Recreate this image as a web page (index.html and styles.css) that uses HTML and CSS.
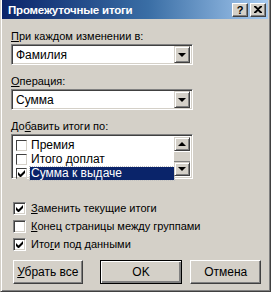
FILE: index.html
```html
<!DOCTYPE html>
<html lang="ru">
<head>
    <meta charset="UTF-8">
    <title>Промежуточные итоги</title>
    <link rel="stylesheet" href="styles.css">
</head>
<body>

<div class="dialog">
    <div class="titlebar">
        <span class="title">Промежуточные итоги</span>
        <div class="title-buttons">
            <span class="tbtn">?</span>
            <span class="tbtn">
                <svg width="8" height="7" viewBox="0 0 8 7"><path d="M0 0h2l2 2 2-2h2v1L5 3.5 8 6v1H6L4 5 2 7H0V6l3-2.5L0 1z" fill="#000"/></svg>
            </span>
        </div>
    </div>

    <div class="content">
        <div class="label first"><u>П</u>ри каждом изменении в:</div>
        <div class="combo">
            <span class="combo-text">Фамилия</span>
            <span class="drop"><span class="arrow-down"></span></span>
        </div>

        <div class="label"><u>О</u>перация:</div>
        <div class="combo">
            <span class="combo-text">Сумма</span>
            <span class="drop"><span class="arrow-down"></span></span>
        </div>

        <div class="label">До<u>б</u>авить итоги по:</div>
        <div class="listbox">
            <div class="list-items">
                <div class="item"><span class="lcheck"></span><span class="item-text">Премия</span></div>
                <div class="item"><span class="lcheck"></span><span class="item-text">Итого доплат</span></div>
                <div class="item">
                    <span class="lcheck"><svg width="7" height="7" viewBox="0 0 7 7"><path d="M0 2v3l2 2h1l4-4V0L2.5 4.5z" fill="#000"/></svg></span>
                    <span class="item-text selected">Сумма к выдаче</span>
                </div>
            </div>
            <div class="scrollbar">
                <span class="sbtn"><span class="arrow-up"></span></span>
                <span class="thumb"></span>
                <span class="sbtn"><span class="arrow-down"></span></span>
            </div>
        </div>

        <div class="options">
            <div class="option">
                <span class="check"><svg width="7" height="7" viewBox="0 0 7 7"><path d="M0 2v3l2 2h1l4-4V0L2.5 4.5z" fill="#000"/></svg></span>
                <span><u>З</u>аменить текущие итоги</span>
            </div>
            <div class="option">
                <span class="check"></span>
                <span><u>К</u>онец страницы между группами</span>
            </div>
            <div class="option">
                <span class="check"><svg width="7" height="7" viewBox="0 0 7 7"><path d="M0 2v3l2 2h1l4-4V0L2.5 4.5z" fill="#000"/></svg></span>
                <span>Ито<u>г</u>и под данными</span>
            </div>
        </div>

        <div class="buttons">
            <button class="btn"><u>У</u>брать все</button>
            <button class="btn default">OK</button>
            <button class="btn">Отмена</button>
        </div>
    </div>
</div>

</body>
</html>
```

FILE: styles.css
```css
body {
    margin: 0;
    padding: 0;
    background-color: #fff;
    font-family: "Liberation Sans", Arial, sans-serif;
    font-size: 11px;
    color: #000;
}

u {
    text-decoration-thickness: 1px;
    text-underline-offset: 1px;
}

.dialog {
    width: 271px;
    height: 292px;
    box-sizing: border-box;
    background: #d4d0c8;
    border-left: 1px solid #d4d0c8;
    border-right: 1px solid #404040;
    border-bottom: 1px solid #404040;
    box-shadow: inset 1px 0 #fff, inset -1px -1px #808080;
    padding: 0 2px 0 1px;
}

/* title bar */
.titlebar {
    height: 19px;
    background: linear-gradient(to right, #0a246a, #3a6ea5 55%, #a6caf0);
    display: flex;
    align-items: center;
    justify-content: space-between;
    padding: 0 2px 0 6px;
}

.title {
    color: #fff;
    font-weight: bold;
    font-size: 11.5px;
    letter-spacing: -0.2px;
}

.title-buttons {
    display: flex;
    gap: 2px;
}

.tbtn {
    width: 14px;
    height: 12px;
    background: #d4d0c8;
    border: 1px solid;
    border-color: #fff #404040 #404040 #fff;
    box-shadow: inset -1px -1px #808080;
    display: flex;
    align-items: center;
    justify-content: center;
    font-weight: bold;
    font-size: 11px;
}

/* body */
.content {
    padding: 0 7px 0 9px;
}

.label {
    height: 13px;
    line-height: 13px;
    margin-top: 10px;
    margin-bottom: 1px;
}

.label.first {
    margin-top: 11px;
}

.combo {
    height: 21px;
    width: 182px;
    box-sizing: border-box;
    background: #fff;
    border: 1px solid;
    border-color: #808080 #fff #fff #808080;
    box-shadow: inset 1px 1px #404040, inset -1px -1px #d4d0c8;
    display: flex;
    align-items: center;
    padding: 2px;
}

.combo-text {
    flex: 1;
    padding-left: 2px;
    font-size: 12px;
}

.drop,
.sbtn {
    width: 16px;
    height: 17px;
    box-sizing: border-box;
    background: #d4d0c8;
    border: 1px solid;
    border-color: #d4d0c8 #404040 #404040 #d4d0c8;
    box-shadow: inset 1px 1px #fff, inset -1px -1px #808080;
    display: flex;
    align-items: center;
    justify-content: center;
}

.arrow-down {
    width: 0;
    height: 0;
    border-left: 4px solid transparent;
    border-right: 4px solid transparent;
    border-top: 4px solid #000;
}

.arrow-up {
    width: 0;
    height: 0;
    border-left: 4px solid transparent;
    border-right: 4px solid transparent;
    border-bottom: 4px solid #000;
}

/* list */
.listbox {
    width: 182px;
    height: 45px;
    box-sizing: border-box;
    background: #fff;
    border: 1px solid;
    border-color: #808080 #fff #fff #808080;
    box-shadow: inset 1px 1px #404040, inset -1px -1px #d4d0c8;
    display: flex;
    padding: 2px;
}

.list-items {
    flex: 1;
    padding-top: 1px;
}

.item {
    height: 14px;
    display: flex;
    align-items: center;
    gap: 3px;
    padding-left: 2px;
}

.lcheck {
    width: 11px;
    height: 11px;
    box-sizing: border-box;
    border: 1px solid;
    border-color: #404040 #d4d0c8 #d4d0c8 #404040;
    display: flex;
    align-items: center;
    justify-content: center;
}

.item-text {
    font-size: 12px;
    line-height: 13px;
    padding: 0 2px 0 1px;
}

.item-text.selected {
    flex: 1;
    background: #0a246a;
    color: #fff;
    outline: 1px dotted #c0c0c0;
}

.scrollbar {
    width: 16px;
    display: flex;
    flex-direction: column;
    background: #e8e6e2;
}

.scrollbar .sbtn {
    height: 14px;
}

.thumb {
    flex: 1;
    background: #d4d0c8;
    border-top: 1px solid #fff;
    border-bottom: 1px solid #808080;
}

/* checkboxes */
.options {
    margin-top: 20px;
}

.option {
    height: 18px;
    display: flex;
    align-items: center;
    gap: 5px;
    padding-left: 2px;
    font-size: 11px;
}

.check {
    width: 13px;
    height: 13px;
    box-sizing: border-box;
    background: #fff;
    border: 1px solid;
    border-color: #808080 #fff #fff #808080;
    box-shadow: inset 1px 1px #404040, inset -1px -1px #d4d0c8;
    display: flex;
    align-items: center;
    justify-content: center;
}

/* buttons */
.buttons {
    display: flex;
    gap: 8px;
    margin-top: 7px;
}

.btn {
    height: 24px;
    font-family: "Liberation Sans", Arial, sans-serif;
    font-size: 12px;
    color: #000;
    background: #d4d0c8;
    border: 1px solid;
    border-color: #fff #404040 #404040 #fff;
    box-shadow: inset -1px -1px #808080;
    padding: 0;
}

.btn:first-child {
    width: 70px;
    margin-left: 2px;
    margin-right: 9px;
}

.btn.default {
    width: 83px;
    border: 1px solid #000;
    box-shadow: inset 1px 1px #fff, inset -2px -2px #808080;
}

.btn:last-child {
    width: 71px;
}
```
